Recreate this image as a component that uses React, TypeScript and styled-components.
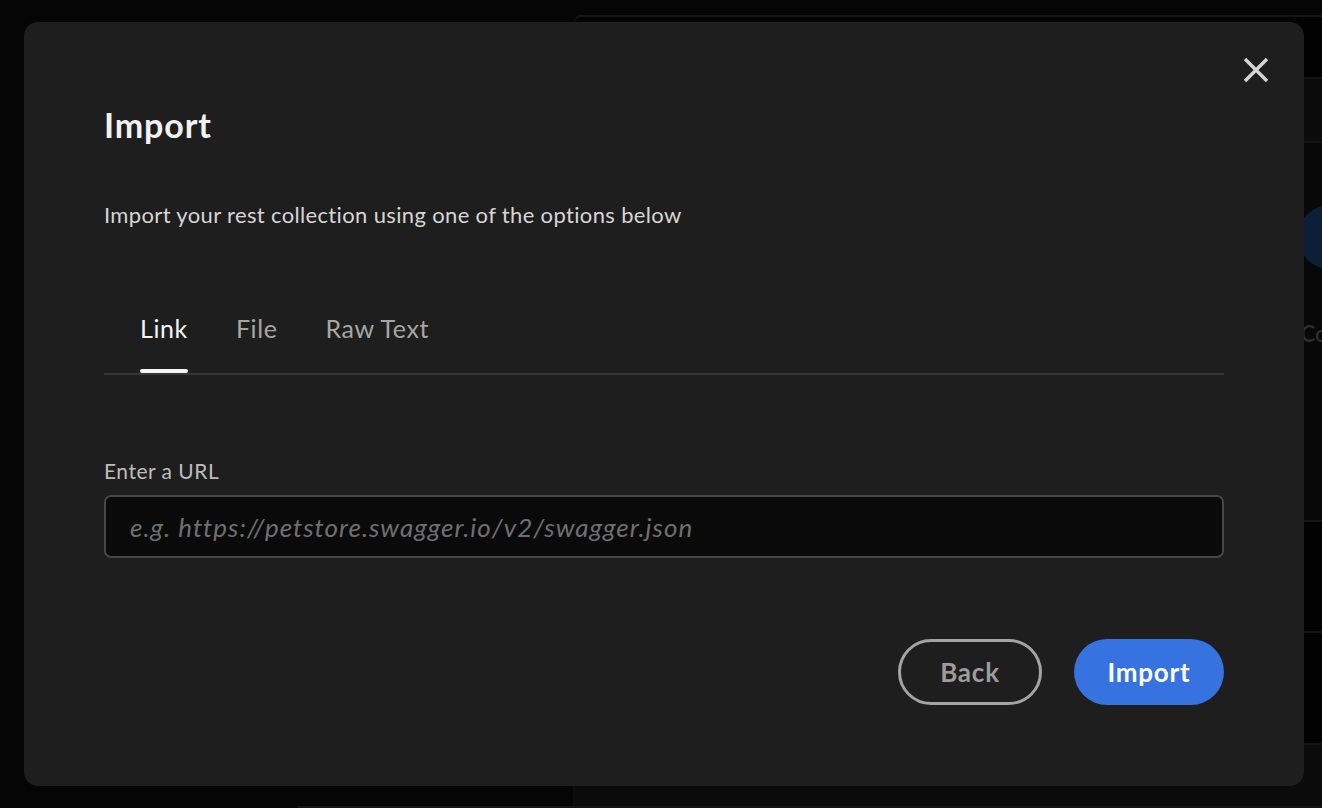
import React, { useState } from "react";
import styled, { createGlobalStyle } from "styled-components";

const GlobalStyle = createGlobalStyle`
  html, body {
    margin: 0;
    padding: 0;
    background: #050505;
    font-family: Lato, "Noto Sans", sans-serif;
    overflow: hidden;
  }
  * { box-sizing: border-box; }
`;

const tabs = ["Link", "File", "Raw Text"];

const App: React.FC = () => {
  const [active, setActive] = useState(0);

  return (
    <>
      <GlobalStyle />
      <Shell>
        <ShellTop>
          <ShellSide />
          <Panel>
            <PanelRow $height={62} />
            <PanelRow $height={64} $tint />
            <EmptyState>
              <EmptyCircle />
              <EmptyText>Con</EmptyText>
            </EmptyState>
            <PanelRow $height={111} />
            <PanelRow $height={112} />
            <PanelRow $height={63} $tint $last />
          </Panel>
        </ShellTop>
        <ShellFooter />
      </Shell>

      <Overlay>
        <Modal>
          <CloseButton aria-label="Close">
            <svg width="26" height="26" viewBox="0 0 26 26">
              <path
                d="M2 2 L24 24 M24 2 L2 24"
                stroke="#d4d4d4"
                strokeWidth="3.4"
                fill="none"
              />
            </svg>
          </CloseButton>
          <Title>Import</Title>
          <Subtitle>Import your rest collection using one of the options below</Subtitle>
          <TabList>
            {tabs.map((t, i) => (
              <Tab key={t} $active={i === active} onClick={() => setActive(i)}>
                {t}
              </Tab>
            ))}
          </TabList>
          <Label>Enter a URL</Label>
          <UrlInput placeholder="e.g. https://petstore.swagger.io/v2/swagger.json" />
          <Actions>
            <GhostButton>Back</GhostButton>
            <PrimaryButton>Import</PrimaryButton>
          </Actions>
        </Modal>
      </Overlay>
    </>
  );
};

export default App;

// Background app (dimmed)

const Shell = styled.div`
  width: 100vw;
  height: 100vh;
  display: flex;
  flex-direction: column;
  padding-top: 15px;
  background: #050505;
`;

const ShellTop = styled.div`
  flex: 1;
  display: flex;
  min-height: 0;
`;

const ShellSide = styled.div`
  width: 573px;
  flex-shrink: 0;
`;

const Panel = styled.div`
  flex: 1;
  display: flex;
  flex-direction: column;
  background: #020202;
  border-top: 2px solid #161616;
  border-left: 2px solid #0c0c0c;
  border-top-left-radius: 8px;
  overflow: hidden;
`;

const PanelRow = styled.div<{ $height: number; $tint?: boolean; $last?: boolean }>`
  height: ${({ $height }) => `${$height}px`};
  flex-shrink: 0;
  background: ${({ $tint }) => ($tint ? "#0b0b0b" : "transparent")};
  border-bottom: ${({ $last }) => ($last ? "none" : "2px solid #141414")};
`;

const EmptyState = styled.div`
  height: 379px;
  flex-shrink: 0;
  display: flex;
  flex-direction: column;
  align-items: flex-end;
  padding-top: 62px;
  border-bottom: 2px solid #141414;
  background: #080808;
`;

const EmptyCircle = styled.div`
  width: 64px;
  height: 64px;
  border-radius: 50%;
  background: #0e1d38;
  margin-right: -40px;
`;

const EmptyText = styled.div`
  margin-top: 52px;
  margin-right: -18px;
  font-size: 22px;
  line-height: 26px;
  color: #2e2e2e;
  font-weight: 600;
`;

const ShellFooter = styled.div`
  height: 2px;
  margin-left: 298px;
  background: #141414;
`;

// Modal

const Overlay = styled.div`
  position: fixed;
  inset: 0;
  padding: 22px 0 0 24px;
`;

const Modal = styled.div`
  position: relative;
  width: 1280px;
  height: 764px;
  background: #1e1e1e;
  border-radius: 14px;
  padding: 83px 80px 80px;
  display: flex;
  flex-direction: column;
`;

const CloseButton = styled.button`
  position: absolute;
  top: 35px;
  right: 35px;
  padding: 0;
  border: none;
  background: transparent;
  cursor: pointer;
  display: flex;
`;

const Title = styled.h1`
  margin: 0;
  font-size: 34px;
  line-height: 40px;
  font-weight: 700;
  letter-spacing: 0.9px;
  color: #f2f2f2;
`;

const Subtitle = styled.p`
  margin: 56px 0 0;
  font-size: 22px;
  line-height: 28px;
  letter-spacing: 0.35px;
  color: #d6d6d6;
`;

const TabList = styled.div`
  margin-top: 84px;
  display: flex;
  padding-left: 12px;
  border-bottom: 2px solid #363636;
`;

const Tab = styled.button<{ $active: boolean }>`
  position: relative;
  padding: 0 24px 30px;
  border: none;
  background: transparent;
  font-family: inherit;
  font-size: 25px;
  line-height: 30px;
  letter-spacing: 0.6px;
  color: ${({ $active }) => ($active ? "#f4f4f4" : "#a6a6a6")};
  cursor: pointer;

  &::after {
    content: "";
    position: absolute;
    left: 24px;
    right: 24px;
    bottom: 0;
    height: 4px;
    border-radius: 2px;
    background: ${({ $active }) => ($active ? "#f4f4f4" : "transparent")};
  }
`;

const Label = styled.label`
  margin-top: 83px;
  font-size: 21px;
  line-height: 26px;
  letter-spacing: 0.5px;
  color: #bdbdbd;
`;

const UrlInput = styled.input`
  margin-top: 11px;
  height: 63px;
  width: 100%;
  padding: 0 24px;
  background: #0a0a0a;
  border: 2px solid #474747;
  border-radius: 7px;
  font-family: inherit;
  font-size: 26px;
  font-style: italic;
  letter-spacing: 1px;
  color: #e0e0e0;
  outline: none;

  &::placeholder {
    color: #6f6f6f;
  }
`;

const Actions = styled.div`
  margin-top: 81px;
  display: flex;
  justify-content: flex-end;
  gap: 32px;
`;

const BaseButton = styled.button`
  height: 66px;
  border-radius: 33px;
  font-family: inherit;
  font-size: 26px;
  font-weight: 700;
  letter-spacing: 0.8px;
  cursor: pointer;
  display: flex;
  align-items: center;
  justify-content: center;
`;

const GhostButton = styled(BaseButton)`
  width: 144px;
  background: transparent;
  border: 3px solid #a3a3a3;
  color: #9c9c9c;
`;

const PrimaryButton = styled(BaseButton)`
  width: 150px;
  background: #3673e0;
  border: none;
  color: #ffffff;
`;
